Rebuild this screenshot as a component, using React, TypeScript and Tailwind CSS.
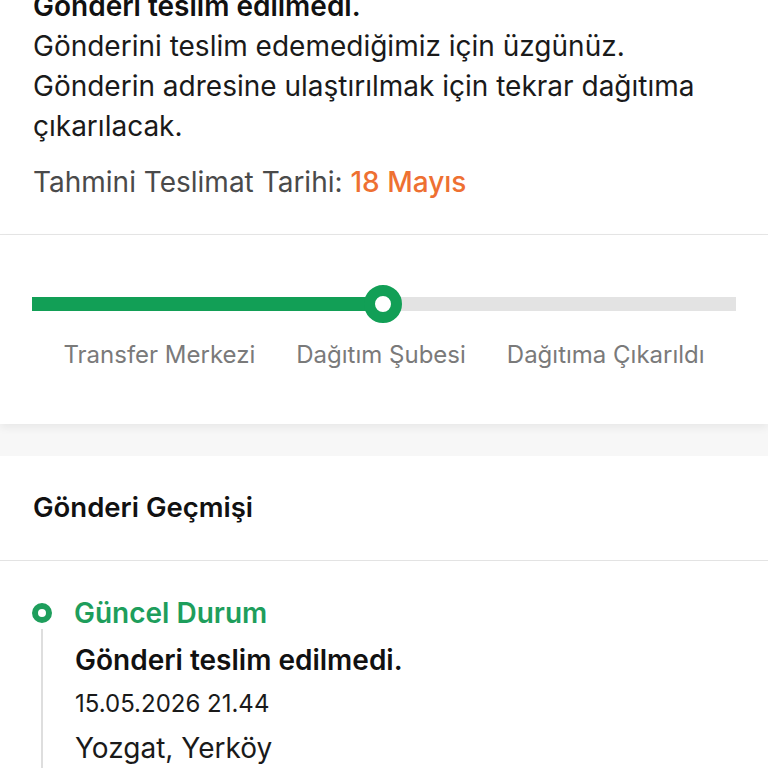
import React from "react";

export default function App() {
  return (
    <div className="w-[768px] h-[768px] overflow-hidden bg-white" style={{ fontFamily: "Inter, 'Liberation Sans', sans-serif" }}>
      <div className="mt-[-14px] px-[33px] pb-[32px] border-b border-[#e6e6e6]">
        <div className="text-[28px] leading-[40px] font-semibold text-[#111]">Gönderi teslim edilmedi.</div>
        <div className="text-[28px] leading-[40px] text-[#1a1a1a]">
          Gönderini teslim edemediğimiz için üzgünüz.
          <br />
          Gönderin adresine ulaştırılmak için tekrar dağıtıma
          <br />
          çıkarılacak.
        </div>
        <div className="mt-[16px] text-[28px] leading-[40px] text-[#4a4a4a]">
          Tahmini Teslimat Tarihi: <span className="font-medium text-[#ee7032]">18 Mayıs</span>
        </div>
      </div>

      <div className="h-[189px] px-[32px] pt-[50px] relative z-10 shadow-[0_4px_8px_rgba(0,0,0,0.06)] bg-white">
        <div className="relative h-[38px] flex items-center">
          <div className="flex-1 h-[14px] bg-[#e3e3e3] flex">
            <div className="w-[350px] h-full bg-[#129f56]" />
          </div>
          <div className="absolute left-[332px] top-0 w-[38px] h-[38px] rounded-full border-[11px] border-[#129f56] bg-white" />
        </div>
        <div className="mt-[17px] flex justify-center gap-[41px] text-[24px] leading-[30px] text-[#7a7a7a]">
          <span>Transfer Merkezi</span>
          <span>Dağıtım Şubesi</span>
          <span>Dağıtıma Çıkarıldı</span>
        </div>
      </div>

      <div className="h-[32px] bg-[#f7f7f7]" />

      <div className="bg-white">
        <div className="h-[105px] px-[33px] flex items-center border-b border-[#e3e3e3]">
          <span className="text-[27.5px] font-semibold text-[#111]">Gönderi Geçmişi</span>
        </div>
        <div className="px-[32px] pt-[36px]">
          <div className="flex items-center gap-[22px] h-[32px]">
            <div className="w-[20px] h-[20px] rounded-full border-[6px] border-[#1e9e5c]" />
            <span className="text-[28px] font-semibold text-[#1e9e5c]">Güncel Durum</span>
          </div>
          <div className="ml-[9px] border-l-2 border-[#dedede] pl-[32px] pt-[13px]">
            <div className="text-[28px] leading-[36px] font-semibold text-[#111]">Gönderi teslim edilmedi.</div>
            <div className="mt-[8px] text-[24px] leading-[36px] text-[#1a1a1a]">15.05.2026 21.44</div>
            <div className="mt-[8px] text-[28px] leading-[36px] text-[#1a1a1a]">Yozgat, Yerköy</div>
            <div className="h-[40px]" />
          </div>
        </div>
      </div>
    </div>
  );
}
